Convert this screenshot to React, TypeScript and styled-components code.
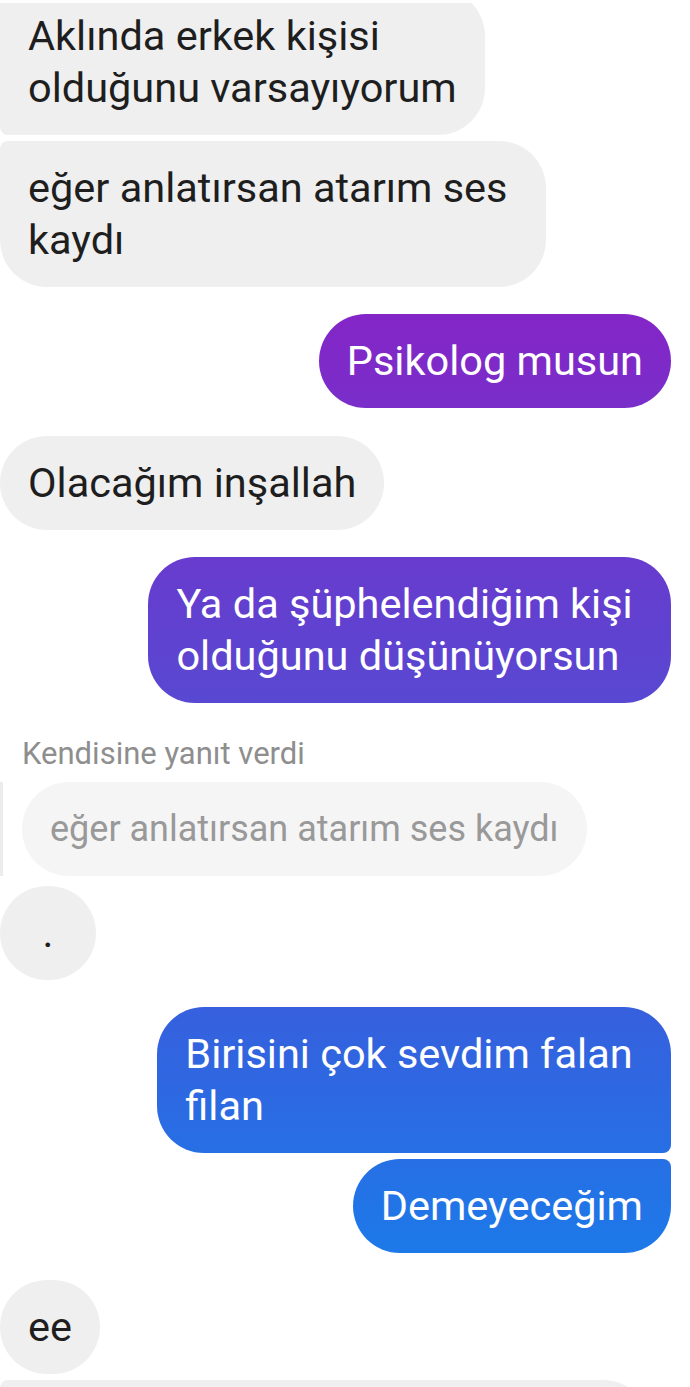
import styled, { createGlobalStyle } from 'styled-components';

const GlobalStyle = createGlobalStyle`
  html, body {
    margin: 0;
    padding: 0;
    background: #fff;
  }
  body {
    font-family: Roboto, "Noto Sans", "Liberation Sans", sans-serif;
    -webkit-font-smoothing: antialiased;
  }
`;

const Screen = styled.div`
  width: 690px;
  height: 1387px;
  overflow: hidden;
  background: #fff;
  display: flex;
  flex-direction: column;
`;

const TopStrip = styled.div`
  height: 3px;
  flex: none;
  background: #fff;
  position: relative;
  z-index: 1;
`;

const Thread = styled.div`
  display: flex;
  flex-direction: column;
  padding-right: 19px;
  margin-top: -14px;
`;

type Side = 'left' | 'right';

const Row = styled.div<{ $side: Side; $gap: number }>`
  display: flex;
  justify-content: ${p => (p.$side === 'right' ? 'flex-end' : 'flex-start')};
  margin-top: ${p => p.$gap}px;
`;

type Corners = [number, number, number, number];

const Bubble = styled.div<{ $variant: 'in' | 'out' | 'quote'; $corners: Corners }>`
  box-sizing: border-box;
  padding: 21px 28px;
  font-size: ${p => (p.$variant === 'quote' ? 36 : 41.5)}px;
  line-height: 52px;
  white-space: pre;
  min-width: 96px;
  border-radius: ${p => p.$corners.map(c => `${c}px`).join(' ')};
  color: ${p => (p.$variant === 'out' ? '#fff' : p.$variant === 'quote' ? '#999999' : '#1e1e1e')};
  background: ${p =>
    p.$variant === 'out'
      ? 'linear-gradient(180deg, #961cc4 0px, #8326c7 320px, #5848d2 700px, #3660de 1010px, #1c7ae9 1260px, #1290ec 1387px) fixed'
      : p.$variant === 'quote'
        ? '#f5f5f5'
        : '#efefef'};
`;

const DotBubble = styled(Bubble)`
  text-align: center;
  padding: 21px 0;
`;

const TailBubble = styled(Bubble)`
  width: 650px;
  height: 94px;
`;

const ReplyLabel = styled.div`
  margin: 34px 0 0 22px;
  font-size: 31px;
  line-height: 34px;
  color: #8e8e8e;
`;

const ReplyRow = styled.div`
  display: flex;
  margin-top: 11px;
  border-left: 3px solid #ececec;
  padding-left: 19px;
`;

const R = 47;
const S = 8;

export default function App() {
  return (
    <>
      <GlobalStyle />
      <Screen>
        <TopStrip />
        <Thread>
          <Row $side="left" $gap={0}>
            <Bubble $variant="in" $corners={[S, R, R, S]}>
              {'Aklında erkek kişisi '}
              <br />
              olduğunu varsayıyorum
            </Bubble>
          </Row>
          <Row $side="left" $gap={6}>
            <Bubble $variant="in" $corners={[S, R, R, R]}>
              {'eğer anlatırsan atarım ses '}
              <br />
              kaydı
            </Bubble>
          </Row>

          <Row $side="right" $gap={27}>
            <Bubble $variant="out" $corners={[R, R, R, R]}>Psikolog musun</Bubble>
          </Row>

          <Row $side="left" $gap={28}>
            <Bubble $variant="in" $corners={[R, R, R, R]}>Olacağım inşallah</Bubble>
          </Row>

          <Row $side="right" $gap={27}>
            <Bubble $variant="out" $corners={[R, R, R, R]}>
              {'Ya da şüphelendiğim kişi '}
              <br />
              olduğunu düşünüyorsun
            </Bubble>
          </Row>

          <ReplyLabel>Kendisine yanıt verdi</ReplyLabel>
          <ReplyRow>
            <Bubble $variant="quote" $corners={[R, R, R, R]}>eğer anlatırsan atarım ses kaydı</Bubble>
          </ReplyRow>
          <Row $side="left" $gap={10}>
            <DotBubble $variant="in" $corners={[R, R, R, R]}>.</DotBubble>
          </Row>

          <Row $side="right" $gap={27}>
            <Bubble $variant="out" $corners={[R, R, S, R]}>
              {'Birisini çok sevdim falan '}
              <br />
              filan
            </Bubble>
          </Row>
          <Row $side="right" $gap={6}>
            <Bubble $variant="out" $corners={[R, S, R, R]}>Demeyeceğim</Bubble>
          </Row>

          <Row $side="left" $gap={27}>
            <Bubble $variant="in" $corners={[R, R, R, R]}>ee</Bubble>
          </Row>
          <Row $side="left" $gap={6}>
            <TailBubble $variant="in" $corners={[S, R, R, R]} />
          </Row>
        </Thread>
      </Screen>
    </>
  );
}
